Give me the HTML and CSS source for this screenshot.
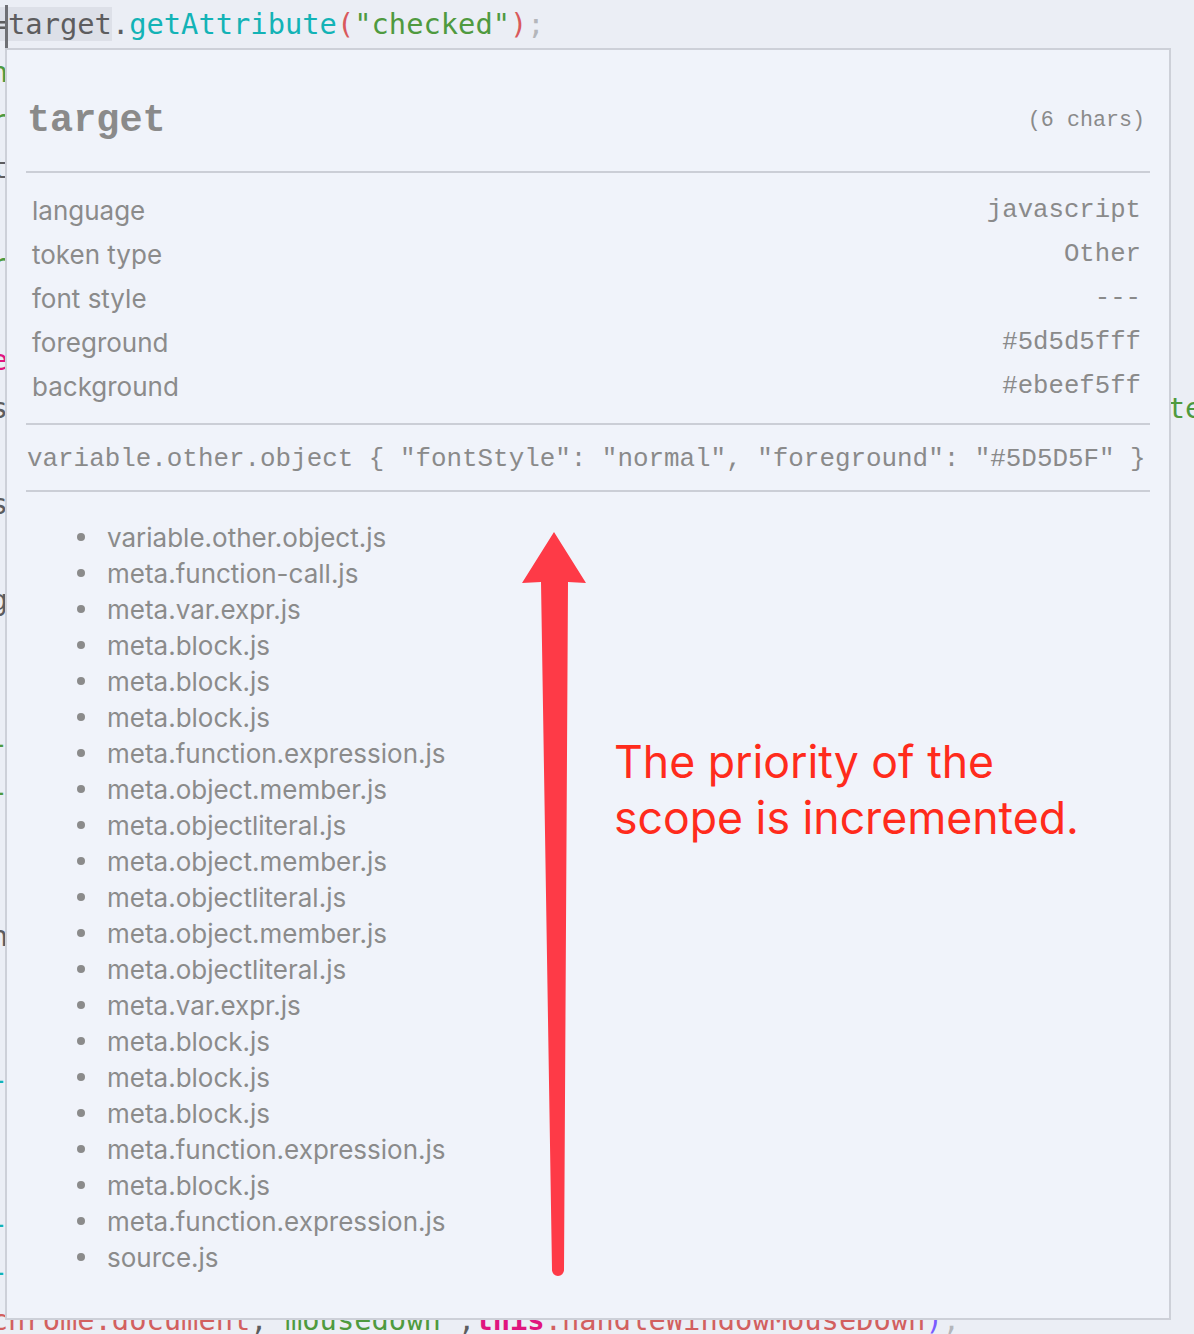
FILE: index.html
```html
<!DOCTYPE html>
<html lang="en">
<head>
<meta charset="utf-8">
<title>Scope inspector</title>
<link rel="stylesheet" href="styles.css">
</head>
<body>
<div class="editor">
  <div class="ln"><span class="sel"><span class="op">=</span>target</span><span class="op">.</span><span class="fn">getAttribute</span><span class="pn">(</span><span class="str">"checked"</span><span class="pn">)</span><span class="semi">;</span></div>
  <div class="ln"><span class="str">n</span></div>
  <div class="ln"><span class="str">r</span></div>
  <div class="ln"><span class="op">t</span></div>
  <div class="ln"></div>
  <div class="ln"><span class="str">r</span></div>
  <div class="ln"></div>
  <div class="ln"><span class="kw">e</span></div>
  <div class="ln"><span class="op">s</span><span class="gap"></span><span class="str">'text'</span></div>
  <div class="ln"></div>
  <div class="ln"><span class="op">s</span></div>
  <div class="ln"></div>
  <div class="ln"><span class="op">g</span></div>
  <div class="ln"></div>
  <div class="ln"></div>
  <div class="ln"><span class="str">-</span></div>
  <div class="ln"><span class="str">-</span></div>
  <div class="ln"></div>
  <div class="ln"></div>
  <div class="ln"><span class="op">n</span></div>
  <div class="ln"></div>
  <div class="ln"></div>
  <div class="ln"><span class="fn">-</span></div>
  <div class="ln"></div>
  <div class="ln"></div>
  <div class="ln"><span class="fn">-</span></div>
  <div class="ln"><span class="fn">-</span></div>
  <div class="ln"><span class="var">chrome.document</span><span class="op">,</span><span class="str">'mousedown'</span><span class="op">,</span><span class="this">this</span><span class="var">.handleWindowMouseDown</span><span class="paren">)</span><span class="semi">,</span></div>
</div>

<div class="caret"></div>

<div class="popup">
  <div class="head">
    <span class="name">target</span>
    <span class="count">(6 chars)</span>
  </div>
  <div class="rows">
    <div class="row"><span class="label">language</span><span class="val">javascript</span></div>
    <div class="row"><span class="label">token type</span><span class="val">Other</span></div>
    <div class="row"><span class="label">font style</span><span class="val">---</span></div>
    <div class="row"><span class="label">foreground</span><span class="val">#5d5d5fff</span></div>
    <div class="row"><span class="label">background</span><span class="val">#ebeef5ff</span></div>
  </div>
  <div class="scope">variable.other.object { "fontStyle": "normal", "foreground": "#5D5D5F" }</div>
  <ul class="scopes">
    <li>variable.other.object.js</li>
    <li>meta.function-call.js</li>
    <li>meta.var.expr.js</li>
    <li>meta.block.js</li>
    <li>meta.block.js</li>
    <li>meta.block.js</li>
    <li>meta.function.expression.js</li>
    <li>meta.object.member.js</li>
    <li>meta.objectliteral.js</li>
    <li>meta.object.member.js</li>
    <li>meta.objectliteral.js</li>
    <li>meta.object.member.js</li>
    <li>meta.objectliteral.js</li>
    <li>meta.var.expr.js</li>
    <li>meta.block.js</li>
    <li>meta.block.js</li>
    <li>meta.block.js</li>
    <li>meta.function.expression.js</li>
    <li>meta.block.js</li>
    <li>meta.function.expression.js</li>
    <li>source.js</li>
  </ul>

  <svg class="arrow" width="70" height="750" viewBox="0 0 70 750" aria-hidden="true">
    <path d="M34 2 L66 53 L48 52 L44 740 A6 6 0 0 1 32 740 L21 52 L2 53 Z" fill="#fe3a47"/>
  </svg>
  <div class="note">The priority of the<br>scope is incremented.</div>
</div>
</body>
</html>
```

FILE: styles.css
```css
html, body {
  margin: 0;
  padding: 0;
}

body {
  width: 1194px;
  height: 1334px;
  overflow: hidden;
  position: relative;
  background: #ebeef5;
  font-family: Inter, "Liberation Sans", sans-serif;
}

/* editor behind the popup (scrolled horizontally a little) */
.editor {
  display: flex;
  flex-direction: column;
  margin-left: -9.3px;
  font-family: "DejaVu Sans Mono", monospace;
  font-size: 28.75px;
  line-height: 48px;
  color: #5d5d5f;
}

.ln {
  height: 48px;
  white-space: pre;
}

.gap {
  display: inline-block;
  width: 66ch;
}

.sel { background: #dde0e8; }
.op { color: #5d5d5f; }
.fn { color: #13b3b6; }
.pn { color: #d9595c; }
.str { color: #4f9a3f; }
.semi { color: #b4b6bb; }
.kw { color: #e0157f; }
.var { color: #d2605f; }
.this { color: #e0157f; font-weight: bold; }
.paren { color: #7a5cff; }

.caret {
  position: absolute;
  left: 5px;
  top: 5px;
  width: 3px;
  height: 43px;
  background: #6f7075;
}

/* hover popup */
.popup {
  position: absolute;
  left: 5px;
  top: 48px;
  width: 1166px;
  height: 1272px;
  box-sizing: border-box;
  border: 2px solid #cdd0d8;
  background: #f0f3fa;
  padding: 0 19px;
  color: #8b8b8b;
}

.head {
  display: flex;
  justify-content: space-between;
  align-items: center;
  height: 123px;
  box-sizing: border-box;
  padding: 20px 5px 0 1px;
  border-bottom: 2px solid #cbced6;
}

.name {
  font-family: "Liberation Mono", monospace;
  font-weight: bold;
  font-size: 38.5px;
  color: #8a8a8a;
}

.count {
  font-family: "Liberation Mono", monospace;
  font-size: 21.7px;
  color: #8a8a8a;
}

.rows {
  display: flex;
  flex-direction: column;
  padding: 15px 9px 15px 6px;
  border-bottom: 2px solid #cbced6;
}

.row {
  display: flex;
  justify-content: space-between;
  align-items: center;
  height: 44px;
}

.label {
  font-size: 26px;
  color: #8b8b8b;
}

.val {
  font-family: "Liberation Mono", monospace;
  font-size: 25.7px;
  color: #8a8a8a;
}

.scope {
  display: flex;
  align-items: center;
  height: 67px;
  padding: 2px 0 0 1px;
  box-sizing: border-box;
  border-bottom: 2px solid #cbced6;
  font-family: "Liberation Mono", monospace;
  font-size: 25.9px;
  white-space: pre;
  color: #8a8a8a;
}

.scopes {
  list-style: none;
  margin: 27px 0 0;
  padding: 0 0 0 51px;
}

.scopes li {
  display: flex;
  align-items: center;
  height: 36px;
  font-size: 26px;
  color: #8b8b8b;
}

.scopes li::before {
  content: "";
  flex: none;
  width: 8px;
  height: 8px;
  border-radius: 50%;
  background: #8b8b8b;
  margin-right: 22px;
}

/* annotation overlays */
.arrow {
  position: absolute;
  left: 513px;
  top: 480px;
}

.note {
  position: absolute;
  left: 607px;
  top: 684px;
  font-size: 44.6px;
  line-height: 56px;
  color: #ff2b1c;
}
```
